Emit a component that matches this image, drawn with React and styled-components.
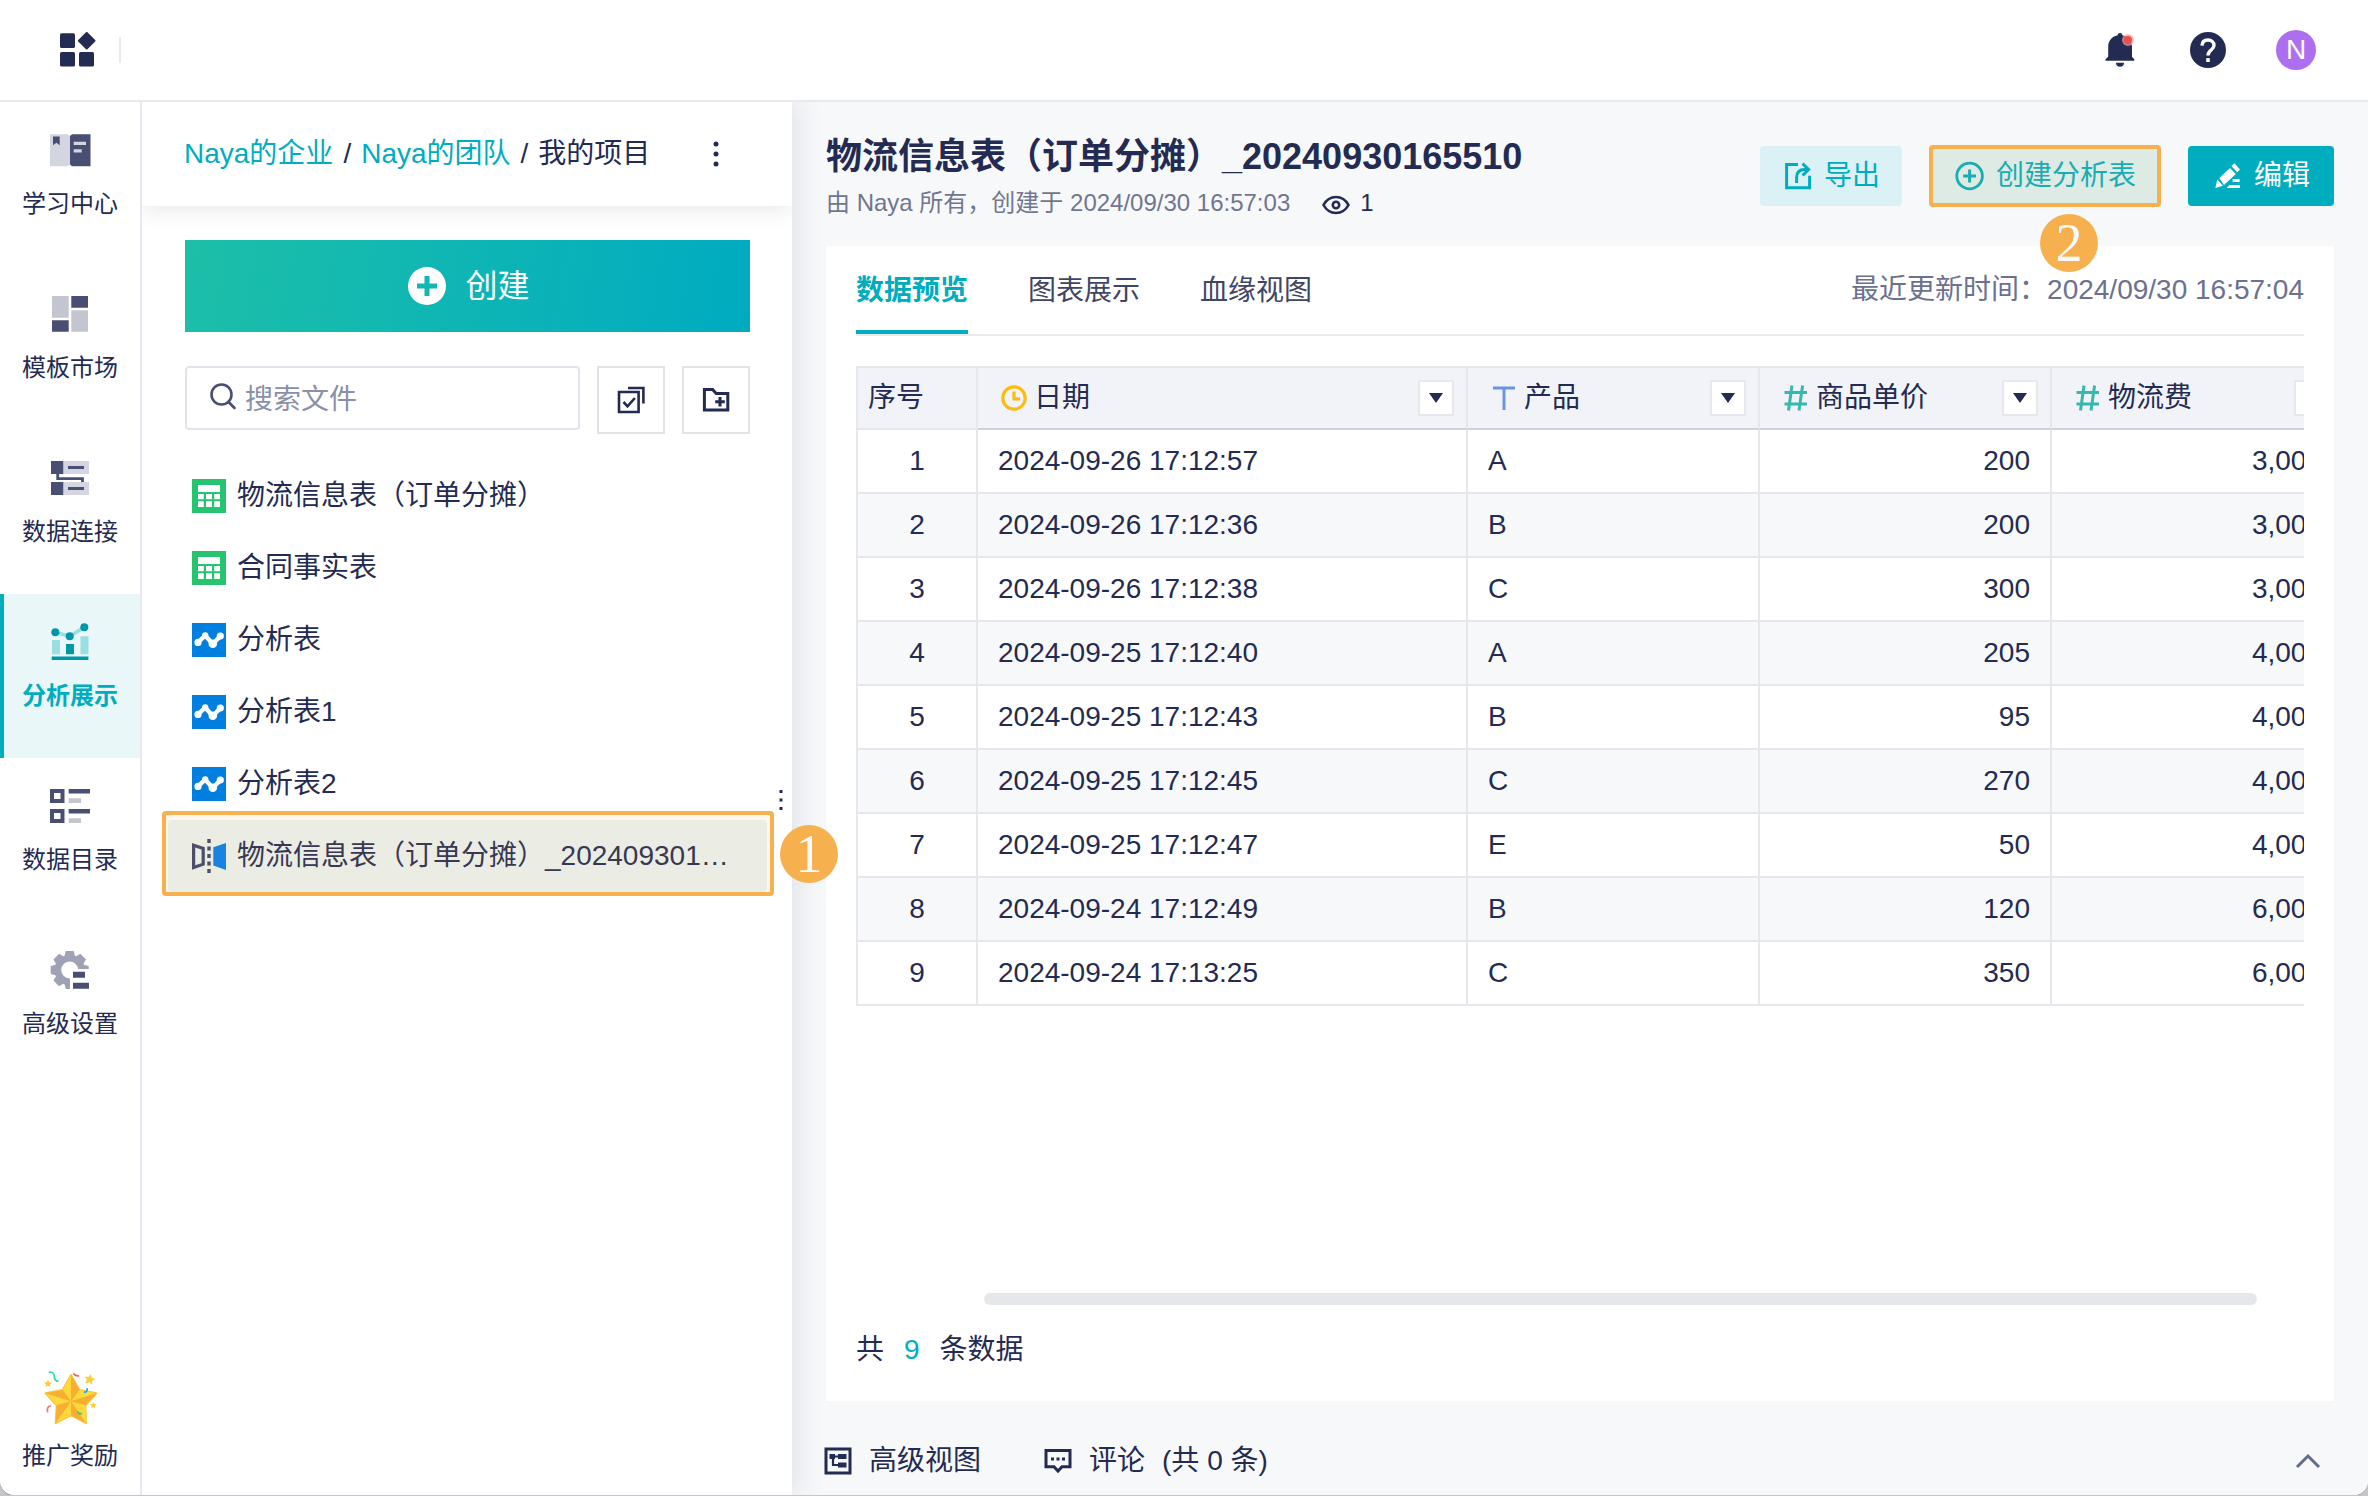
import React from 'react'
import styled, { createGlobalStyle } from 'styled-components'

const GlobalStyle = createGlobalStyle`
  * {
    box-sizing: border-box;
  }

  body {
    margin: 0;
    background: #c6c6c8;
    color: #232b52;
    font-family: 'Liberation Sans', 'Noto Sans CJK SC', sans-serif;
    font-size: 28px;
    line-height: 40px;
  }

  button, input {
    font: inherit;
    color: inherit;
  }

  button {
    margin: 0;
    padding: 0;
    border: 0;
    background: none;
    cursor: pointer;
  }

  a {
    color: inherit;
    text-decoration: none;
  }

  svg {
    display: block;
    flex: none;
  }
`

const Page = styled.div`
  min-height: calc(100vh - 1px);
  display: flex;
  flex-direction: column;
  overflow: hidden;
  background: #fff;
  border-radius: 0 0 14px 14px;
  box-shadow: 0 1px 0 #989898;
`

/* top bar */

const TopBar = styled.header`
  display: flex;
  align-items: center;
  height: 102px;
  padding: 0 52px 0 60px;
  border-bottom: 2px solid #e8e9ee;
`

const Divider = styled.span`
  width: 2px;
  height: 26px;
  margin-left: 23px;
  background: #e8eaf0;
`

const TopActions = styled.div`
  display: flex;
  align-items: center;
  gap: 50px;
  margin-left: auto;
`

const Avatar = styled.button`
  width: 40px;
  height: 40px;
  border-radius: 50%;
  background: #ad6ff0;
  color: #fff;
`

const Body = styled.div`
  display: flex;
  flex: 1;
`

/* left nav */

const Nav = styled.nav`
  display: flex;
  flex-direction: column;
  flex: none;
  width: 142px;
  border-right: 2px solid #e8e9f0;
`

const NavItem = styled.a`
  display: flex;
  flex-direction: column;
  align-items: center;
  gap: 16px;
  height: 164px;
  padding-top: 26px;
  font-size: 24px;
  line-height: 36px;
  ${props => props.$active && `
    background: #e9f7f9;
    box-shadow: inset 4px 0 0 #00adbe;
    color: #00adbe;
    font-weight: bold;
  `}
`

const RewardItem = styled(NavItem)`
  gap: 13px;
  height: auto;
  margin-top: auto;
  padding: 0 0 21px;
`

/* file panel */

const Panel = styled.aside`
  position: relative;
  z-index: 1;
  flex: none;
  width: 650px;
  background: #fff;
  box-shadow: 6px 0 26px rgba(35, 43, 82, 0.1);
  clip-path: inset(0 -60px 0 0);
`

const Crumbs = styled.div`
  display: flex;
  align-items: center;
  gap: 10px;
  height: 104px;
  padding: 0 70px 0 42px;
  box-shadow: 0 4px 20px rgba(35, 43, 82, 0.1);
  clip-path: inset(0 0 -40px 0);
`

const CrumbLink = styled.a`
  color: #00adbe;
`

const MoreButton = styled.button`
  margin-left: auto;
`

const PanelTools = styled.div`
  padding: 34px 42px 26px 43px;
`

const CreateButton = styled.button`
  display: flex;
  align-items: center;
  justify-content: center;
  gap: 18px;
  width: 100%;
  height: 92px;
  background: linear-gradient(100deg, #1dbfa8, #00abc1);
  color: #fff;
  font-size: 32px;
`

const SearchRow = styled.div`
  display: flex;
  align-items: flex-start;
  gap: 17px;
  margin-top: 34px;
`

const SearchBox = styled.label`
  display: flex;
  align-items: center;
  gap: 6px;
  flex: 1;
  min-width: 0;
  height: 64px;
  padding: 0 22px;
  border: 2px solid #e1e4eb;
  border-radius: 4px;
`

const SearchInput = styled.input`
  flex: 1;
  min-width: 0;
  padding: 4px 0 0;
  border: 0;
  outline: 0;
  background: none;

  &::placeholder {
    color: #8a90a8;
    opacity: 1;
  }
`

const SquareButton = styled.button`
  display: flex;
  align-items: center;
  justify-content: center;
  width: 68px;
  height: 68px;
  border: 2px solid #e3e4e9;
`

const FileList = styled.ul`
  margin: 0;
  padding: 0 25px 0 26px;
  list-style: none;
`

const FileItem = styled.li`
  position: relative;
`

const FileLink = styled.a`
  display: flex;
  align-items: center;
  gap: 11px;
  height: 72px;
  padding: 0 32px 0 24px;
  border-radius: 4px;
  background: ${props => props.$selected ? '#eaf4f7' : 'none'};
`

const FileName = styled.span`
  overflow: hidden;
  text-overflow: ellipsis;
  white-space: nowrap;
`

const ResizeHandle = styled.div`
  position: absolute;
  top: 686px;
  right: 6px;
`

/* step marks that lie over the page */

const StepFrame = styled.span`
  position: absolute;
  inset: ${props => props.$inset};
  border: 4px solid #f6b04e;
  border-radius: 4px;
  background: rgba(246, 176, 78, 0.1);
  pointer-events: none;
`

const StepBadge = styled.span`
  position: absolute;
  top: ${props => props.$top};
  left: ${props => props.$left};
  z-index: 2;
  width: 58px;
  height: 58px;
  border-radius: 50%;
  background: #f6b04e;
  color: #f7f8fa;
  font-family: 'Liberation Serif', serif;
  font-size: 54px;
  line-height: 58px;
  text-align: center;
  pointer-events: none;
`

/* main area */

const Main = styled.main`
  display: flex;
  flex: 1;
  flex-direction: column;
  min-width: 0;
  background: #f7f8fa;
`

const MainHead = styled.div`
  display: flex;
  align-items: flex-start;
  justify-content: space-between;
  padding: 31px 34px 25px;
`

const Title = styled.h1`
  margin: 0;
  font-size: 36px;
  line-height: 48px;
`

const Meta = styled.div`
  display: flex;
  align-items: center;
  gap: 32px;
  margin-top: 4px;
  color: #70768f;
  font-size: 24px;
  line-height: 36px;
`

const Views = styled.span`
  display: flex;
  align-items: center;
  gap: 10px;
  color: #232b52;
`

const Actions = styled.div`
  display: flex;
  gap: 28px;
  margin-top: 13px;
`

const ActionWrap = styled.div`
  position: relative;
`

const ActionButton = styled.button`
  display: flex;
  align-items: center;
  gap: 12px;
  height: 60px;
  padding: 0 ${props => props.$compact ? '22px' : '24px'};
  border-radius: 4px;
  background: ${props => props.$primary ? '#00adbe' : '#dcf1f5'};
  color: ${props => props.$primary ? '#fff' : '#00adbe'};
`

const Card = styled.section`
  display: flex;
  flex: 1;
  flex-direction: column;
  min-width: 0;
  margin: 0 34px;
  padding: 0 30px 31px;
  background: #fff;
`

const TabBar = styled.div`
  display: flex;
  align-items: center;
  gap: 60px;
  height: 90px;
  border-bottom: 2px solid #e8e9ee;
`

const Tab = styled.button`
  height: 88px;
  padding-top: 6px;
  border-bottom: 4px solid ${props => props.$active ? '#00adbe' : 'transparent'};
  color: ${props => props.$active ? '#00adbe' : '#3e4568'};
  font-weight: ${props => props.$active ? 'bold' : 'normal'};
`

const Updated = styled.span`
  margin-left: auto;
  color: #6b7190;
`

const TableScroll = styled.div`
  flex: 1;
  margin-top: 30px;
  overflow: hidden;
`

const Table = styled.table`
  width: 1488px;
  table-layout: fixed;
  border-collapse: separate;
  border-spacing: 0;
`

const HeadCell = styled.th`
  height: 64px;
  padding: 0 ${props => props.$index ? '10px' : '12px 0 20px'};
  border-top: 2px solid #e6e7ec;
  border-right: 2px solid #e6e7ec;
  border-bottom: 2px solid ${props => props.$index ? '#e6e7ec' : '#cfd1d9'};
  background: #f2f3f8;
  font-weight: normal;
  text-align: left;

  &:first-child {
    border-left: 2px solid #e6e7ec;
  }
`

const HeadInner = styled.div`
  display: flex;
  align-items: center;
  gap: 4px;
`

const FilterButton = styled.button`
  display: flex;
  align-items: center;
  justify-content: center;
  width: 36px;
  height: 36px;
  margin-left: auto;
  border: 2px solid #e6e7ec;
  background: #fff;
`

const Row = styled.tr`
  background: ${props => props.$even ? '#f7f8fa' : '#fff'};
`

const Cell = styled.td`
  height: 64px;
  padding: 0 20px;
  border-right: 2px solid #e6e7ec;
  border-bottom: 2px solid #e6e7ec;
  text-align: ${props => props.$align || 'left'};

  &:first-child {
    border-left: 2px solid #e6e7ec;
  }
`

const ScrollThumb = styled.div`
  height: 12px;
  margin: 0 47px 0 128px;
  border-radius: 6px;
  background: #e5e7ea;
`

const Total = styled.div`
  display: flex;
  gap: 20px;
  margin-top: 25px;
`

const Count = styled.span`
  color: #00adbe;
`

const BottomBar = styled.footer`
  display: flex;
  align-items: flex-start;
  gap: 63px;
  height: 94px;
  padding: 26px 46px 0 32px;
`

const BottomButton = styled.button`
  display: flex;
  align-items: center;
  gap: 17px;
  height: 68px;
`

const CollapseButton = styled(BottomButton)`
  margin-left: auto;
`

/* icons */

const dark = '#484f73'
const light = '#c3c5d1'

const GridIcon = () => (
  <svg width="36" height="36" viewBox="0 0 36 36" fill="#232b52">
    <rect x="0" y="1.3" width="15" height="14.7" rx="1.6" />
    <rect x="0" y="20" width="15" height="14.5" rx="1.6" />
    <rect x="19" y="20" width="15" height="14.5" rx="1.6" />
    <rect x="20.2" y="2.2" width="13" height="13" rx="1" transform="rotate(45 26.7 8.7)" />
  </svg>
)

const BellIcon = () => (
  <svg width="36" height="36" viewBox="0 0 36 36" fill="#232b52">
    <path d="M16 1a2.4 2.4 0 0 1 2.4 2.2C24.5 4.5 28 9 28 15v9.8l2.3 2.4v1.6H1.5v-1.6l2.7-2.4V15C4.2 9 7.5 4.5 13.6 3.2A2.4 2.4 0 0 1 16 1z" />
    <path d="M12 30.8h8a4 4 0 0 1-8 0z" />
    <circle cx="24" cy="8" r="6" fill="#f3a3ab" opacity=".7" />
    <circle cx="24" cy="8" r="4" fill="#ee4b4b" />
  </svg>
)

const HelpIcon = () => (
  <svg width="36" height="36" viewBox="0 0 36 36" fill="none">
    <circle cx="18" cy="18" r="18" fill="#232b52" />
    <path d="M12 13.6C12.2 9.8 14.6 8 18 8s6 2 6 5.4c0 4.6-6 4.8-6 10" stroke="#fff" strokeWidth="3.4" />
    <rect x="16.2" y="26.2" width="3.6" height="3.8" fill="#fff" />
  </svg>
)

const BookIcon = () => (
  <svg width="42" height="42" viewBox="0 0 42 42">
    <path d="M1 6.3h17.5L21 8v28.4l-2.5 1.8H1z" fill="#d3d6e0" />
    <path d="M23 6.3h18.5v31.9H23L21 36.4V8z" fill={dark} />
    <path d="M4 8.6h6.7v8.7l-3.3-2.6L4 17.3z" fill={dark} />
    <path d="M24.7 13.8H37V17H24.7zM24.7 21.2h8v3.4h-8z" fill="#d3d6e0" />
  </svg>
)

const TemplateIcon = () => (
  <svg width="42" height="42" viewBox="0 0 42 42">
    <path d="M3 4h16.7v21.7H3zM22.3 18.3H39v21.4H22.3z" fill={light} />
    <path d="M22.3 4H39v11.7H22.3zM3 28.3h16.7v11.4H3z" fill={dark} />
  </svg>
)

const ConnectIcon = () => (
  <svg width="42" height="42" viewBox="0 0 42 42">
    <path d="M14.3 5H40v13H14.3zM14.3 26H40v13H14.3z" fill="#d3d6e0" />
    <path d="M2 5h12.3v13H2zM2 26h12.3v13H2zM19 10h16v3H19zM19 31h16v3H19z" fill={dark} />
    <path d="M8.7 18v4.6h24.8V26" fill="none" stroke={dark} strokeWidth="2.8" />
  </svg>
)

const AnalysisIcon = () => (
  <svg width="42" height="42" viewBox="0 0 42 42">
    <path d="M6.3 12.3l14.4 4 14.6-9" fill="none" stroke="#9adde3" strokeWidth="3.6" />
    <path d="M3 20h8v14.3H3zM31.5 16.3h8v18h-8z" fill="#9adde3" />
    <g fill="#0097a7">
      <circle cx="6.3" cy="12.3" r="4" />
      <circle cx="20.7" cy="16.3" r="4" />
      <circle cx="35.3" cy="7.3" r="4" />
      <path d="M17 24h8v10.3h-8zM2.7 36.6h36.7V40H2.7z" />
    </g>
  </svg>
)

const CatalogIcon = () => (
  <svg width="42" height="42" viewBox="0 0 42 42">
    <path d="M3 7h10.5v10H3zM3 27h10.5v10H3z" fill="none" stroke={dark} strokeWidth="4" />
    <path d="M19.7 5H41v4.6H19.7zM19.7 25H41v4.6H19.7z" fill={dark} />
    <path d="M19.7 14.2H32V19H19.7zM19.7 34.2H32V39H19.7z" fill={light} />
  </svg>
)

const GearIcon = () => (
  <svg width="42" height="42" viewBox="0 0 42 42">
    <g fill="#9fa2b5">
      {[0, 45, 90, 135, 180, 225, 270, 315].map(deg => (
        <path key={deg} d="M16.7 3h8l1.4 6H15.3z" transform={`rotate(${deg} 20.7 22)`} />
      ))}
    </g>
    <circle cx="20.7" cy="22" r="11.8" fill="none" stroke="#9fa2b5" strokeWidth="6.6" />
    <path d="M21 21h21v21H21z" fill="#fff" />
    <path d="M24 23.8h12v6H24zM24 34.8h16v6H24z" fill={dark} />
  </svg>
)

const smallStar = 'M0-1l.3.62.68.08-.5.47.13.68L0 .52l-.61.33.13-.68-.5-.47.68-.08z'

const StarIcon = () => (
  <svg width="56" height="56" viewBox="0 0 56 56">
    <path d="M29 6l8.3 15 17 3.3-11 12L44 54l-15-8-15.3 8 1-17.700-11-12 17-3.300z" fill="#fbc236" stroke="#fbc236" strokeWidth="2" strokeLinejoin="round" />
    <path d="M29 32.3L20.7 21 29 6zM29 32.3L37.3 21l17 3.3zM29 32.3l14.3 4L44 54zM29 32.3V46l-15.3 8zM29 32.3l-14.3 4-11-12z" fill="#ffd93b" />
    <path d="M29 32.3V6l8.3 15zM29 32.3l25.3-8-11 12zM29 32.3L44 54l-15-8zM29 32.3L13.7 54l1-17.7zM29 32.3l-25.3-8 17-3.3z" fill="#f8ae33" />
    <g fill="#fbcf3a">
      <path d={smallStar} transform="translate(6 14.7) scale(4)" />
      <path d={smallStar} transform="translate(47.7 10.5) rotate(12) scale(5.6)" />
      <path d={smallStar} transform="translate(51.3 36.3) scale(3.4)" />
    </g>
    <g fill="none" strokeWidth="1.8" strokeLinecap="round">
      <path d="M7.5 3.2c4 0 4.6 1.4 4.8 4.2s1.4 4.6 3.6 4.8" stroke="#2de0a5" />
      <path d="M32 5c1 1.4 2.4 2 4.4 1.8" stroke="#fb6340" />
      <path d="M42.6 23.2c1.6 0 2.6-1.4 2.6-3.4" stroke="#1ab0f5" />
      <path d="M8.3 37c-2.4.6-3.4 2.8-2.8 5.6" stroke="#fa7484" />
      <path d="M35.8 43c.8 1.4 2 2 3.6 1.6" stroke="#35cf8f" />
    </g>
  </svg>
)

const DotsIcon = () => (
  <svg width="12" height="28" viewBox="0 0 12 28" fill="#232b52">
    <circle cx="6" cy="4" r="2.5" />
    <circle cx="6" cy="14" r="2.5" />
    <circle cx="6" cy="24" r="2.5" />
  </svg>
)

const HandleIcon = () => (
  <svg width="10" height="24" viewBox="0 0 10 24" fill="#232b52">
    <path d="M3.500 2h3v3h-3zM3.500 10.500h3v3h-3zM3.500 19h3v3h-3z" />
  </svg>
)

const PlusFilledIcon = () => (
  <svg width="42" height="42" viewBox="0 0 42 42">
    <circle cx="22" cy="21" r="19" fill="#fff" />
    <path d="M22 11v20M12 21h20" stroke="#11b7b3" strokeWidth="5" />
  </svg>
)

const SearchIcon = () => (
  <svg width="30" height="30" viewBox="0 0 30 30" fill="none" stroke="#484f73" strokeWidth="2.6" strokeLinecap="round">
    <circle cx="12.5" cy="11.5" r="10" />
    <path d="M19.5 19l6 6" />
  </svg>
)

const SelectIcon = () => (
  <svg width="30" height="30" viewBox="0 0 30 30" fill="none" stroke="#232b52" strokeWidth="2.6">
    <path d="M3 7h19.6v20H3zM12 3h15.4v15.5M7.5 17l4 4.3 7.4-8.3" />
  </svg>
)

const FolderIcon = () => (
  <svg width="30" height="30" viewBox="0 0 30 30" fill="none" stroke="#232b52" strokeWidth="3">
    <path d="M3.4 4.5h8.2l3.6 4h11.600v16.600H3.400zM19 12v9.600M14.200 16.800h9.600" />
  </svg>
)

const SheetIcon = () => (
  <svg width="34" height="34" viewBox="0 0 34 34">
    <path d="M0 0h34v34H0z" fill="#27c46f" />
    <path d="M6 6h22v7H6zM6 15h5.8v5.2H6zM14 15h6v5.2h-6zM22.2 15H28v5.2h-5.8zM6 22.2h5.8V28H6zM14 22.2h6V28h-6zM22.2 22.2H28V28h-5.8z" fill="#fff" />
  </svg>
)

const TrendIcon = () => (
  <svg width="34" height="34" viewBox="0 0 34 34">
    <path d="M0 0h34v34H0z" fill="#007fe0" />
    <path d="M6 19.3l7.2-6.8 7.6 8.6 7.6-8" fill="none" stroke="#fff" strokeWidth="4.4" strokeLinejoin="round" />
    <g fill="#fff">
      <circle cx="6" cy="19.4" r="3.6" />
      <circle cx="13.2" cy="12.4" r="3.2" />
      <circle cx="20.8" cy="20.8" r="4.3" />
      <circle cx="28.3" cy="13" r="3.6" />
    </g>
  </svg>
)

const MirrorIcon = () => (
  <svg width="34" height="34" viewBox="0 0 34 34">
    <path d="M1.6 6.3l9.6 3.1v15.8l-9.6 3.4z" fill="none" stroke="#3a446b" strokeWidth="3.2" />
    <path d="M17 0v34" stroke="#3a446b" strokeWidth="3.4" strokeDasharray="4 3.5" />
    <path d="M21.3 8.2L34 4v27l-12.7-4.4z" fill="#017ff0" />
  </svg>
)

const EyeIcon = () => (
  <svg width="28" height="28" viewBox="0 0 28 28" fill="none" stroke="#232b52" strokeWidth="2.6">
    <path d="M1.5 16C4.5 10.5 9 8 14 8s9.5 2.5 12.5 8c-3 5.5-7.5 8-12.5 8S4.5 21.5 1.5 16z" />
    <circle cx="14" cy="16" r="3.2" />
  </svg>
)

const ExportIcon = () => (
  <svg width="30" height="30" viewBox="0 0 30 30" fill="none" stroke="currentColor" strokeWidth="3">
    <path d="M16 3.6H4.6v23.2h23v-12M14.6 22v-5.5q0-8 8-8h4M20.6 2.6l6 5.9-6 6" />
  </svg>
)

const PlusCircleIcon = () => (
  <svg width="30" height="30" viewBox="0 0 30 30" fill="none" stroke="currentColor" strokeWidth="2.8">
    <circle cx="15.6" cy="15" r="12.8" />
    <path d="M15.6 8.6v12.8M9.2 15H22" strokeWidth="3" />
  </svg>
)

const EditIcon = () => (
  <svg width="30" height="30" viewBox="0 0 30 30" fill="currentColor">
    <path d="M7.3 17L18 7l5.8 6L12 24zM19.4 5l3-2.8L28 8.6l-2.8 2.7zM5.4 18.6l5.6 6.2L3.3 27zM20.6 18h7v3h-7zM17.5 24H28v3H14.5z" />
  </svg>
)

const ClockIcon = () => (
  <svg width="32" height="32" viewBox="0 0 32 32" fill="none" stroke="#fbbc0e" strokeWidth="3.2">
    <circle cx="16" cy="16" r="11.2" />
    <path d="M16 9.5v7.3h6" />
  </svg>
)

const TextIcon = () => (
  <svg width="32" height="32" viewBox="0 0 32 32" fill="none" stroke="#6a93e4" strokeWidth="3">
    <path d="M5 6h22M16 6v22" />
  </svg>
)

const NumberIcon = () => (
  <svg width="32" height="32" viewBox="0 0 32 32" fill="none" stroke="#36b9ad" strokeWidth="3">
    <path d="M12 3.5L8.500 28.500M22.600 3.500L19 28.500M4.500 10.500h22.500M4.500 22h22.500" />
  </svg>
)

const ArrowIcon = () => (
  <svg width="16" height="12" viewBox="0 0 16 12" fill="#232b52">
    <path d="M1 1h14L8 11z" />
  </svg>
)

const ViewIcon = () => (
  <svg width="28" height="28" viewBox="0 0 28 28" fill="#232b52">
    <path d="M2 2h24v24H2z" fill="none" stroke="#232b52" strokeWidth="3" />
    <path d="M5.5 7H11v5H5.5zM14 7h8.5v5H14zM14 15.5h8.5v5H14z" />
    <path d="M10 9.5h5M9 11v7h6" fill="none" stroke="#232b52" strokeWidth="2.2" />
  </svg>
)

const CommentIcon = () => (
  <svg width="28" height="28" viewBox="0 0 28 28" fill="#232b52">
    <path d="M2 3.5h24v16.3h-8L14 24l-4-4.2H2z" fill="none" stroke="#232b52" strokeWidth="3" />
    <path d="M7 10.5h3v3H7zM12.5 10.5h3v3h-3zM18 10.5h3v3h-3z" />
  </svg>
)

const ChevronIcon = () => (
  <svg width="28" height="28" viewBox="0 0 28 28" fill="none" stroke="#646b8c" strokeWidth="3">
    <path d="M3 20L14 9l11 11" />
  </svg>
)

const navItems = [
  { label: '学习中心', Icon: BookIcon },
  { label: '模板市场', Icon: TemplateIcon },
  { label: '数据连接', Icon: ConnectIcon },
  { label: '分析展示', Icon: AnalysisIcon, active: true },
  { label: '数据目录', Icon: CatalogIcon },
  { label: '高级设置', Icon: GearIcon }
]

const files = [
  { name: '物流信息表（订单分摊）', Icon: SheetIcon },
  { name: '合同事实表', Icon: SheetIcon },
  { name: '分析表', Icon: TrendIcon },
  { name: '分析表1', Icon: TrendIcon },
  { name: '分析表2', Icon: TrendIcon },
  { name: '物流信息表（订单分摊）_20240930165510', Icon: MirrorIcon, selected: true }
]

const tabs = ['数据预览', '图表展示', '血缘视图']

const columns = [
  { label: '日期', Icon: ClockIcon },
  { label: '产品', Icon: TextIcon },
  { label: '商品单价', Icon: NumberIcon },
  { label: '物流费', Icon: NumberIcon }
]

const rows = [
  ['2024-09-26 17:12:57', 'A', '200', '3,000'],
  ['2024-09-26 17:12:36', 'B', '200', '3,000'],
  ['2024-09-26 17:12:38', 'C', '300', '3,000'],
  ['2024-09-25 17:12:40', 'A', '205', '4,000'],
  ['2024-09-25 17:12:43', 'B', '95', '4,000'],
  ['2024-09-25 17:12:45', 'C', '270', '4,000'],
  ['2024-09-25 17:12:47', 'E', '50', '4,000'],
  ['2024-09-24 17:12:49', 'B', '120', '6,000'],
  ['2024-09-24 17:13:25', 'C', '350', '6,000']
]

class App extends React.Component {

  constructor(props) {
    super(props)
    this.state = {
      currentTab: tabs[0],
      search: ''
    }
  }

  changeTab(tab) {
    this.setState({
      currentTab: tab
    })
  }

  changeSearch(e) {
    this.setState({
      search: e.target.value
    })
  }

  renderPanel() {
    const shown = files.filter(file => file.name.includes(this.state.search))
    return (
      <Panel>
        <Crumbs>
          <CrumbLink href="#company">Naya的企业</CrumbLink>
          <span>/</span>
          <CrumbLink href="#team">Naya的团队</CrumbLink>
          <span>/</span>
          <span>我的项目</span>
          <MoreButton aria-label="更多"><DotsIcon /></MoreButton>
        </Crumbs>
        <PanelTools>
          <CreateButton><PlusFilledIcon />创建</CreateButton>
          <SearchRow>
            <SearchBox htmlFor="file-search">
              <SearchIcon />
              <SearchInput
                id="file-search"
                aria-label="搜索文件"
                placeholder="搜索文件"
                value={this.state.search}
                onChange={this.changeSearch.bind(this)}
              />
            </SearchBox>
            <SquareButton aria-label="批量选择"><SelectIcon /></SquareButton>
            <SquareButton aria-label="新建文件夹"><FolderIcon /></SquareButton>
          </SearchRow>
        </PanelTools>
        <FileList>
          {shown.map(({ name, Icon, selected }) => (
            <FileItem key={name}>
              <FileLink href="#file" $selected={selected}>
                <Icon />
                <FileName>{name}</FileName>
              </FileLink>
              {selected ? <StepFrame $inset="-9px -7px -4px -6px" /> : null}
              {selected ? <StepBadge $top="5px" $left="calc(100% + 13px)">1</StepBadge> : null}
            </FileItem>
          ))}
        </FileList>
        <ResizeHandle><HandleIcon /></ResizeHandle>
      </Panel>
    )
  }

  renderTable() {
    return (
      <TableScroll>
        <Table>
          <colgroup>
            <col width="122" />
            <col width="490" />
            <col width="292" />
            <col width="292" />
            <col width="292" />
          </colgroup>
          <thead>
            <tr>
              <HeadCell $index>序号</HeadCell>
              {columns.map(({ label, Icon }) => (
                <HeadCell key={label}>
                  <HeadInner>
                    <Icon />
                    <span>{label}</span>
                    <FilterButton aria-label={label + '筛选'}><ArrowIcon /></FilterButton>
                  </HeadInner>
                </HeadCell>
              ))}
            </tr>
          </thead>
          <tbody>
            {rows.map((row, i) => (
              <Row key={row[0]} $even={i % 2 === 1}>
                <Cell $align="center">{i + 1}</Cell>
                <Cell>{row[0]}</Cell>
                <Cell>{row[1]}</Cell>
                <Cell $align="right">{row[2]}</Cell>
                <Cell $align="right">{row[3]}</Cell>
              </Row>
            ))}
          </tbody>
        </Table>
      </TableScroll>
    )
  }

  render() {
    return (
      <Page>
        <GlobalStyle />
        <TopBar>
          <button aria-label="应用"><GridIcon /></button>
          <Divider />
          <TopActions>
            <button aria-label="通知"><BellIcon /></button>
            <button aria-label="帮助"><HelpIcon /></button>
            <Avatar>N</Avatar>
          </TopActions>
        </TopBar>
        <Body>
          <Nav>
            {navItems.map(({ label, Icon, active }) => (
              <NavItem key={label} href="#nav" $active={active}>
                <Icon />
                {label}
              </NavItem>
            ))}
            <RewardItem href="#reward">
              <StarIcon />
              推广奖励
            </RewardItem>
          </Nav>
          {this.renderPanel()}
          <Main>
            <MainHead>
              <div>
                <Title>物流信息表（订单分摊）_20240930165510</Title>
                <Meta>
                  <span>由 Naya 所有，创建于 2024/09/30 16:57:03</span>
                  <Views><EyeIcon />1</Views>
                </Meta>
              </div>
              <Actions>
                <ActionButton $compact><ExportIcon />导出</ActionButton>
                <ActionWrap>
                  <ActionButton><PlusCircleIcon />创建分析表</ActionButton>
                  <StepFrame $inset="-1px" />
                  <StepBadge $top="68px" $left="calc(50% - 5px)">2</StepBadge>
                </ActionWrap>
                <ActionButton $primary><EditIcon />编辑</ActionButton>
              </Actions>
            </MainHead>
            <Card>
              <TabBar>
                {tabs.map(tab => (
                  <Tab
                    key={tab}
                    $active={tab === this.state.currentTab}
                    onClick={() => this.changeTab(tab)}
                  >
                    {tab}
                  </Tab>
                ))}
                <Updated>最近更新时间：2024/09/30 16:57:04</Updated>
              </TabBar>
              {this.renderTable()}
              <ScrollThumb />
              <Total>
                <span>共</span>
                <Count>9</Count>
                <span>条数据</span>
              </Total>
            </Card>
            <BottomBar>
              <BottomButton><ViewIcon />高级视图</BottomButton>
              <BottomButton><CommentIcon /><span>评论</span><span>(共 0 条)</span></BottomButton>
              <CollapseButton aria-label="展开"><ChevronIcon /></CollapseButton>
            </BottomBar>
          </Main>
        </Body>
      </Page>
    )
  }
}

export default App
